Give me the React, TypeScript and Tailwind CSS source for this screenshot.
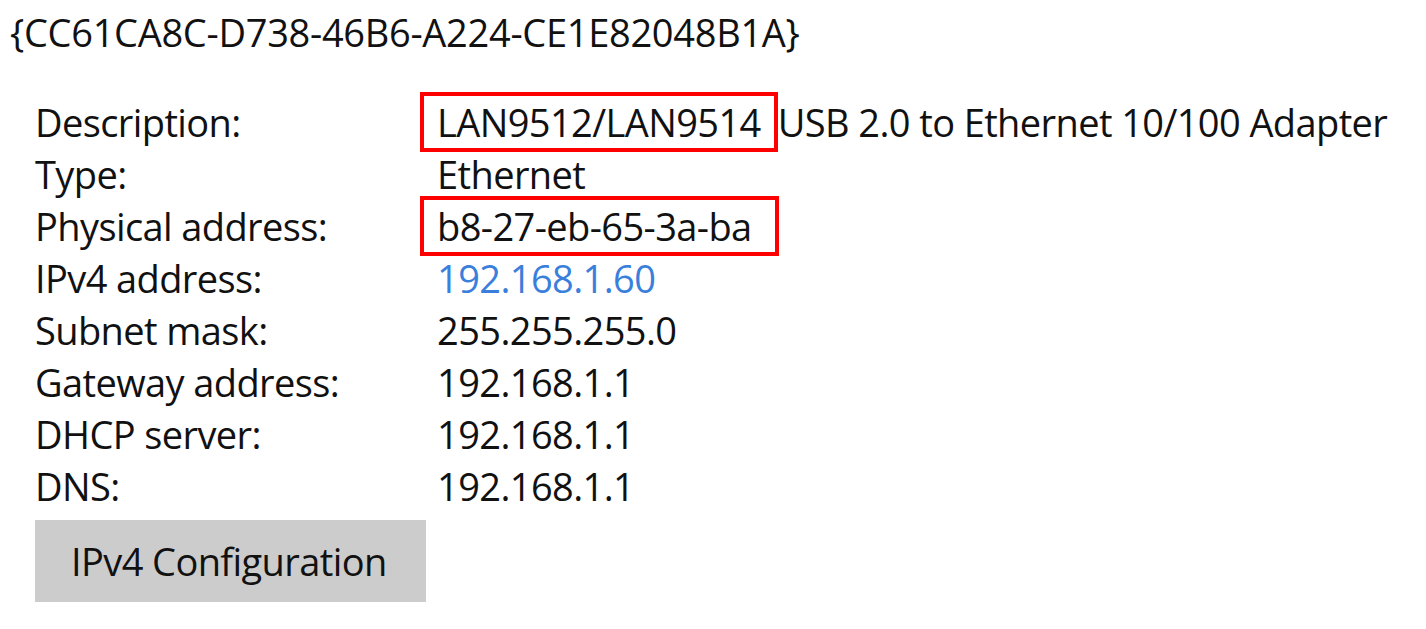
export default function App() {
  const rows: { label: string; value: React.ReactNode }[] = [
    {
      label: "Description:",
      value: (
        <>
          <span className="ml-[-17px] border-4 border-[#ff0000] pl-[13px] pr-[13px]">LAN9512/LAN9514</span>
          USB 2.0 to Ethernet 10/100 Adapter
        </>
      ),
    },
    { label: "Type:", value: "Ethernet" },
    {
      label: "Physical address:",
      value: <span className="ml-[-17px] border-4 border-[#ff0000] pl-[13px] pr-[23px]">b8-27-eb-65-3a-ba</span>,
    },
    { label: "IPv4 address:", value: <span className="text-[#3b7fdd]">192.168.1.60</span> },
    { label: "Subnet mask:", value: "255.255.255.0" },
    { label: "Gateway address:", value: "192.168.1.1" },
    { label: "DHCP server:", value: "192.168.1.1" },
    { label: "DNS:", value: "192.168.1.1" },
  ]

  return (
    <div className="h-[629px] w-[1426px] overflow-hidden bg-white font-['Open_Sans',sans-serif] text-[38px] tracking-[-0.6px] text-[#111]">
      <div className="pl-[10px] pt-[6px] leading-[52px] tracking-[-0.3px]">{"{CC61CA8C-D738-46B6-A224-CE1E82048B1A}"}</div>
      <div className="mt-[38px] pl-[35px]">
        <div className="grid grid-cols-[402px_auto] leading-[52px]">
          {rows.map((row) => (
            <div key={row.label} className="contents">
              <div>{row.label}</div>
              <div className="whitespace-nowrap">{row.value}</div>
            </div>
          ))}
        </div>
        <button className="mt-[8px] flex h-[82px] w-[391px] items-center bg-[#cccccc] pl-[36px] text-[38px] tracking-[-0.6px] text-[#111]">
          IPv4 Configuration
        </button>
      </div>
    </div>
  )
}
